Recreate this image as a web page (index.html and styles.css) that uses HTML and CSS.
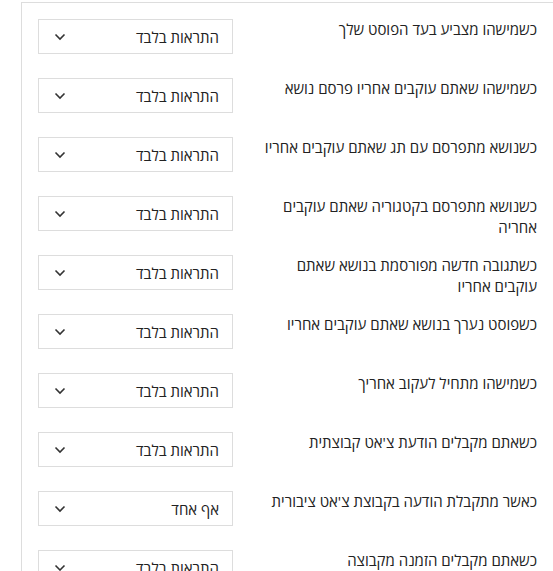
FILE: index.html
```html
<!DOCTYPE html>
<html lang="he" dir="rtl">
<head>
<meta charset="utf-8">
<link rel="stylesheet" href="styles.css">
</head>
<body>
<div class="panel">
  <div class="row"><div class="label">כשמישהו מצביע בעד הפוסט שלך</div><div class="select"><span>התראות בלבד</span><svg class="chev" viewBox="0 0 12 8" width="12" height="8"><path d="M1.5 1.5 L6 6 L10.5 1.5" fill="none" stroke="#333" stroke-width="1.6"/></svg></div></div>
  <div class="row"><div class="label">כשמישהו שאתם עוקבים אחריו פרסם נושא</div><div class="select"><span>התראות בלבד</span><svg class="chev" viewBox="0 0 12 8" width="12" height="8"><path d="M1.5 1.5 L6 6 L10.5 1.5" fill="none" stroke="#333" stroke-width="1.6"/></svg></div></div>
  <div class="row"><div class="label">כשנושא מתפרסם עם תג שאתם עוקבים אחריו</div><div class="select"><span>התראות בלבד</span><svg class="chev" viewBox="0 0 12 8" width="12" height="8"><path d="M1.5 1.5 L6 6 L10.5 1.5" fill="none" stroke="#333" stroke-width="1.6"/></svg></div></div>
  <div class="row"><div class="label">כשנושא מתפרסם בקטגוריה שאתם עוקבים אחריה</div><div class="select"><span>התראות בלבד</span><svg class="chev" viewBox="0 0 12 8" width="12" height="8"><path d="M1.5 1.5 L6 6 L10.5 1.5" fill="none" stroke="#333" stroke-width="1.6"/></svg></div></div>
  <div class="row"><div class="label">כשתגובה חדשה מפורסמת בנושא שאתם עוקבים אחריו</div><div class="select"><span>התראות בלבד</span><svg class="chev" viewBox="0 0 12 8" width="12" height="8"><path d="M1.5 1.5 L6 6 L10.5 1.5" fill="none" stroke="#333" stroke-width="1.6"/></svg></div></div>
  <div class="row"><div class="label">כשפוסט נערך בנושא שאתם עוקבים אחריו</div><div class="select"><span>התראות בלבד</span><svg class="chev" viewBox="0 0 12 8" width="12" height="8"><path d="M1.5 1.5 L6 6 L10.5 1.5" fill="none" stroke="#333" stroke-width="1.6"/></svg></div></div>
  <div class="row"><div class="label">כשמישהו מתחיל לעקוב אחריך</div><div class="select"><span>התראות בלבד</span><svg class="chev" viewBox="0 0 12 8" width="12" height="8"><path d="M1.5 1.5 L6 6 L10.5 1.5" fill="none" stroke="#333" stroke-width="1.6"/></svg></div></div>
  <div class="row"><div class="label">כשאתם מקבלים הודעת צ'אט קבוצתית</div><div class="select"><span>התראות בלבד</span><svg class="chev" viewBox="0 0 12 8" width="12" height="8"><path d="M1.5 1.5 L6 6 L10.5 1.5" fill="none" stroke="#333" stroke-width="1.6"/></svg></div></div>
  <div class="row"><div class="label">כאשר מתקבלת הודעה בקבוצת צ'אט ציבורית</div><div class="select"><span>אף אחד</span><svg class="chev" viewBox="0 0 12 8" width="12" height="8"><path d="M1.5 1.5 L6 6 L10.5 1.5" fill="none" stroke="#333" stroke-width="1.6"/></svg></div></div>
  <div class="row"><div class="label">כשאתם מקבלים הזמנה מקבוצה</div><div class="select"><span>התראות בלבד</span><svg class="chev" viewBox="0 0 12 8" width="12" height="8"><path d="M1.5 1.5 L6 6 L10.5 1.5" fill="none" stroke="#333" stroke-width="1.6"/></svg></div></div>
</div>
</body>
</html>
```
FILE: styles.css
```css
html, body {
  margin: 0;
  padding: 0;
  background: #fff;
  overflow: hidden;
}
body {
  font-family: "Open Sans", "DejaVu Sans", sans-serif;
  font-size: 15px;
  color: #222;
  width: 553px;
  height: 571px;
}
.panel {
  margin-top: 2px;
  margin-left: 21px;
  border-top: 1px solid #ddd;
  border-left: 1px solid #ddd;
  padding: 16px 16px 0 16px;
  display: flex;
  flex-direction: column;
}
.row {
  display: flex;
  justify-content: space-between;
  align-items: flex-start;
  height: 59px;
  flex-shrink: 0;
}
.label {
  width: 280px;
  line-height: 21px;
  text-align: right;
}
.select {
  box-sizing: border-box;
  width: 195px;
  height: 35px;
  border: 1px solid #ddd;
  display: flex;
  align-items: center;
  justify-content: space-between;
  padding: 0 13px 0 13px;
  line-height: 20px;
}
.select span {
  padding-top: 1px;
}
.chev {
  display: block;
  margin-left: 2px;
}
```
